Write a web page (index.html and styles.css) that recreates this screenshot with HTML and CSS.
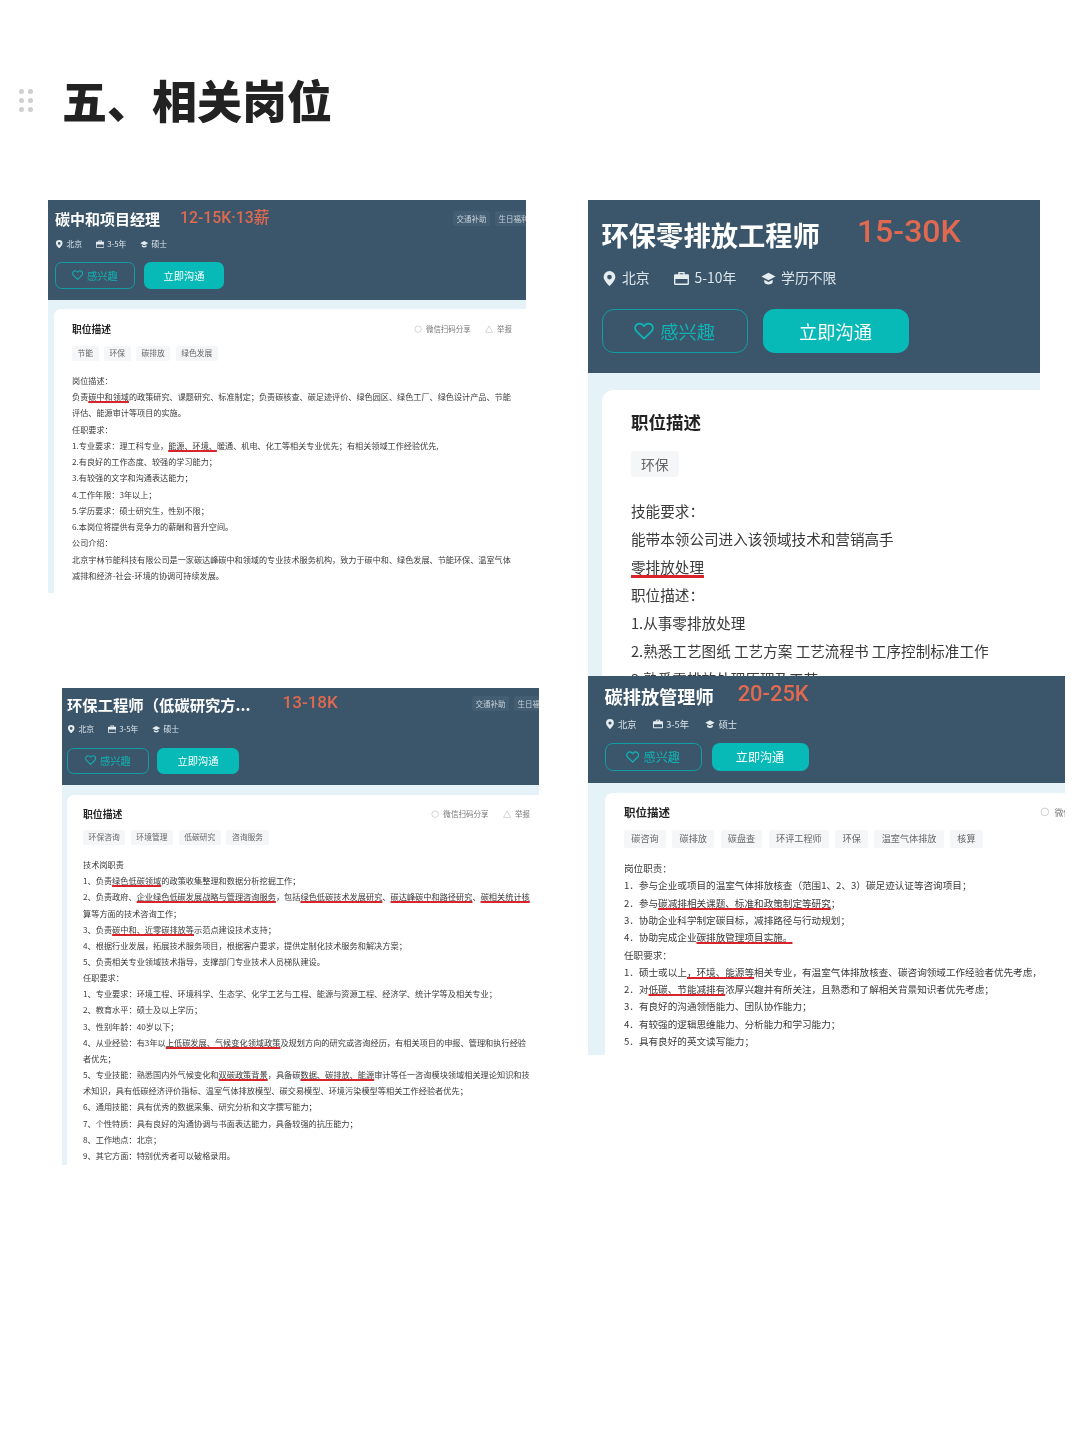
FILE: index.html
```html
<!DOCTYPE html>
<html lang="zh-CN">
<head>
  <meta charset="utf-8">
  <title>五、相关岗位</title>
  <link rel="stylesheet" href="styles.css">
</head>
<body>
  <svg width="0" height="0" class="defs">
    <symbol id="i-pin" viewBox="0 0 12 14"><path fill-rule="evenodd" d="M6 0a5.500 5.500 0 0 0-5.500 5.500C.5 9 6 14 6 14s5.500-5 5.500-8.500A5.500 5.500 0 0 0 6 0zm0 3.500a2.200 2.200 0 1 1 0 4.400 2.200 2.200 0 0 1 0-4.400z"/></symbol>
    <symbol id="i-bag" viewBox="0 0 14 14"><path fill-rule="evenodd" d="M4 1h6v2h3a1 1 0 0 1 1 1v8a1 1 0 0 1-1 1H1a1 1 0 0 1-1-1V4a1 1 0 0 1 1-1h3zm1.300 1.200V3h3.400v-.8zM1.300 7.500V11.700h11.400V7.500z"/></symbol>
    <symbol id="i-cap" viewBox="0 0 16 14"><path d="M8 1 .5 5 8 9l7.500-4z"/><path d="M3.500 8.300V11c0 1.300 2 2.300 4.500 2.300s4.500-1 4.500-2.300V8.300L8 10.700z"/></symbol>
    <symbol id="i-heart" viewBox="0 0 20 18"><path fill="none" stroke="currentColor" stroke-width="1.800" stroke-linejoin="round" d="M10 16.500 2.600 9.300C.4 7.100.7 4 2.800 2.400 4.900.9 7.900 1.300 10 4c2.100-2.700 5.100-3.100 7.200-1.600 2.100 1.600 2.400 4.700.2 6.900z"/></symbol>
    <symbol id="i-share" viewBox="0 0 14 14"><circle cx="7" cy="7" r="5.500" fill="none" stroke="currentColor" stroke-width="1"/></symbol>
    <symbol id="i-warn" viewBox="0 0 14 14"><path fill="none" stroke="currentColor" stroke-width="1" d="M7 1.500 13 12.500H1z"/></symbol>
  </svg>

  <header class="page-head">
    <div class="grip"><i></i><i></i><i></i><i></i><i></i><i></i></div>
    <h1>五、相关岗位</h1>
  </header>

  <!-- 环保零排放 -->
  <section class="shot shot-b">
    <div class="head">
      <div class="top">
        <h2>环保零排放工程师</h2>
        <span class="pay">15-30K</span>
      </div>
      <div class="meta">
        <span><svg class="ico"><use href="#i-pin"/></svg>北京</span>
        <span><svg class="ico"><use href="#i-bag"/></svg>5-10年</span>
        <span><svg class="ico"><use href="#i-cap"/></svg>学历不限</span>
      </div>
      <div class="btns">
        <span class="btn btn-line"><svg class="heart"><use href="#i-heart"/></svg>感兴趣</span>
        <span class="btn btn-fill">立即沟通</span>
      </div>
    </div>
    <div class="panel">
      <div class="panel-top"><h3>职位描述</h3></div>
      <div class="tags"><span>环保</span></div>
      <div class="desc">
        技能要求：<br>
        能带本领公司进入该领域技术和营销高手<br>
        <u>零排放处理</u><br>
        职位描述：<br>
        1.从事零排放处理<br>
        2.熟悉工艺图纸 工艺方案 工艺流程书 工序控制标准工作<br>
        3.熟悉零排放处理原理及工艺
      </div>
    </div>
  </section>

  <!-- 碳中和 -->
  <section class="shot shot-a">
    <div class="head">
      <div class="top">
        <h2>碳中和项目经理</h2>
        <span class="pay">12-15K·13薪</span>
        <div class="perks"><span>交通补助</span><span>生日福利</span></div>
      </div>
      <div class="meta">
        <span><svg class="ico"><use href="#i-pin"/></svg>北京</span>
        <span><svg class="ico"><use href="#i-bag"/></svg>3-5年</span>
        <span><svg class="ico"><use href="#i-cap"/></svg>硕士</span>
      </div>
      <div class="btns">
        <span class="btn btn-line"><svg class="heart"><use href="#i-heart"/></svg>感兴趣</span>
        <span class="btn btn-fill">立即沟通</span>
      </div>
    </div>
    <div class="panel">
      <div class="panel-top">
        <h3>职位描述</h3>
        <div class="links">
          <span><svg class="ico-s"><use href="#i-share"/></svg>微信扫码分享</span>
          <span><svg class="ico-s"><use href="#i-warn"/></svg>举报</span>
        </div>
      </div>
      <div class="tags"><span>节能</span><span>环保</span><span>碳排放</span><span>绿色发展</span></div>
      <div class="desc">
        岗位描述：<br>
        负责<u>碳中和领域</u>的政策研究、课题研究、标准制定；负责碳核查、碳足迹评价、绿色园区、绿色工厂、绿色设计产品、节能<br>
        评估、能源审计等项目的实施。<br>
        任职要求：<br>
        1.专业要求：理工科专业，<u>能源、环境、</u>暖通、机电、化工等相关专业优先；有相关领域工作经验优先,<br>
        2.有良好的工作态度、较强的学习能力；<br>
        3.有较强的文字和沟通表达能力；<br>
        4.工作年限：3年以上；<br>
        5.学历要求：硕士研究生，性别不限；<br>
        6.本岗位将提供有竞争力的薪酬和晋升空间。<br>
        公司介绍：<br>
        北京宇林节能科技有限公司是一家碳达峰碳中和领域的专业技术服务机构，致力于碳中和、绿色发展、节能环保、温室气体<br>
        减排和经济-社会-环境的协调可持续发展。
      </div>
    </div>
  </section>

  <!-- 低碳研究 -->
  <section class="shot shot-c">
    <div class="head">
      <div class="top">
        <h2>环保工程师（低碳研究方...</h2>
        <span class="pay">13-18K</span>
        <div class="perks"><span>交通补助</span><span>生日福利</span></div>
      </div>
      <div class="meta">
        <span><svg class="ico"><use href="#i-pin"/></svg>北京</span>
        <span><svg class="ico"><use href="#i-bag"/></svg>3-5年</span>
        <span><svg class="ico"><use href="#i-cap"/></svg>硕士</span>
      </div>
      <div class="btns">
        <span class="btn btn-line"><svg class="heart"><use href="#i-heart"/></svg>感兴趣</span>
        <span class="btn btn-fill">立即沟通</span>
      </div>
    </div>
    <div class="panel">
      <div class="panel-top">
        <h3>职位描述</h3>
        <div class="links">
          <span><svg class="ico-s"><use href="#i-share"/></svg>微信扫码分享</span>
          <span><svg class="ico-s"><use href="#i-warn"/></svg>举报</span>
        </div>
      </div>
      <div class="tags"><span>环保咨询</span><span>环境管理</span><span>低碳研究</span><span>咨询服务</span></div>
      <div class="desc">
        技术岗职责<br>
        1、负责<u>绿色低碳领域</u>的政策收集整理和数据分析挖掘工作；<br>
        2、负责政府、<u>企业绿色低碳发展战略与管理咨询服务</u>，包括<u>绿色低碳技术发展研究</u>、<u>碳达峰碳中和路径研究</u>、<u>碳相关统计核</u><br>
        算等方面的技术咨询工作；<br>
        3、负责<u>碳中和、近零碳排放等</u>示范点建设技术支持；<br>
        4、根据行业发展，拓展技术服务项目，根据客户要求，提供定制化技术服务和解决方案；<br>
        5、负责相关专业领域技术指导，支撑部门专业技术人员梯队建设。<br>
        任职要求：<br>
        1、专业要求：环境工程、环境科学、生态学、化学工艺与工程、能源与资源工程、经济学、统计学等及相关专业；<br>
        2、教育水平：硕士及以上学历；<br>
        3、性别年龄：40岁以下；<br>
        4、从业经验：有3年以<u>上低碳发展、气候变化领域政策</u>及规划方向的研究或咨询经历，有相关项目的申报、管理和执行经验<br>
        者优先；<br>
        5、专业技能：熟悉国内外气候变化和<u>双碳政策背景</u>，具备碳<u>数据、碳排放、能源</u>审计等任一咨询模块领域相关理论知识和技<br>
        术知识，具有低碳经济评价指标、温室气体排放模型、碳交易模型、环境污染模型等相关工作经验者优先；<br>
        6、通用技能：具有优秀的数据采集、研究分析和文字撰写能力；<br>
        7、个性特质：具有良好的沟通协调与书面表达能力，具备较强的抗压能力；<br>
        8、工作地点：北京；<br>
        9、其它方面：特别优秀者可以破格录用。
      </div>
    </div>
  </section>

  <!-- 碳排放 -->
  <section class="shot shot-d">
    <div class="head">
      <div class="top">
        <h2>碳排放管理师</h2>
        <span class="pay">20-25K</span>
      </div>
      <div class="meta">
        <span><svg class="ico"><use href="#i-pin"/></svg>北京</span>
        <span><svg class="ico"><use href="#i-bag"/></svg>3-5年</span>
        <span><svg class="ico"><use href="#i-cap"/></svg>硕士</span>
      </div>
      <div class="btns">
        <span class="btn btn-line"><svg class="heart"><use href="#i-heart"/></svg>感兴趣</span>
        <span class="btn btn-fill">立即沟通</span>
      </div>
    </div>
    <div class="panel">
      <div class="panel-top">
        <h3>职位描述</h3>
        <div class="links">
          <span><svg class="ico-s"><use href="#i-share"/></svg>微信扫码分享</span>
          <span><svg class="ico-s"><use href="#i-warn"/></svg>举报</span>
        </div>
      </div>
      <div class="tags"><span>碳咨询</span><span>碳排放</span><span>碳盘查</span><span>环评工程师</span><span>环保</span><span>温室气体排放</span><span>核算</span></div>
      <div class="desc">
        岗位职责：<br>
        1．参与企业或项目的温室气体排放核查（范围1、2、3）碳足迹认证等咨询项目；<br>
        2．参与<u>碳减排相关课题、标准和政策制定等研究</u>；<br>
        3．协助企业科学制定碳目标，减排路径与行动规划；<br>
        4．协助完成企业<u>碳排放管理项目实施。</u><br>
        任职要求：<br>
        1．硕士或以上<u>，环境、能源等</u>相关专业，有温室气体排放核查、碳咨询领域工作经验者优先考虑，<br>
        2．对<u>低碳、节能减排有</u>浓厚兴趣并有所关注，且熟悉和了解相关背景知识者优先考虑；<br>
        3．有良好的沟通领悟能力、团队协作能力；<br>
        4．有较强的逻辑思维能力、分析能力和学习能力；<br>
        5．具有良好的英文读写能力；
      </div>
    </div>
  </section>
</body>
</html>
```

FILE: styles.css
```css
body {
  margin: 0;
  height: 1440px;
  position: relative;
  overflow: hidden;
  background-color: #fff;
  font-family: "Noto Sans CJK SC", "Noto Sans", sans-serif;
  color: #333;
}

.defs {
  display: block;
  height: 0;
}

/* page title */
.page-head {
  display: flex;
  align-items: center;
  padding: 66px 0 0 19px;
  gap: 29px;
  filter: blur(0.5px);
}

.grip {
  display: grid;
  grid-template-columns: 5px 5px;
  gap: 4px;
}

.grip i {
  width: 5px;
  height: 5px;
  border-radius: 50%;
  background-color: #cfcfcf;
}

h1 {
  margin: 0;
  font-size: 45px;
  line-height: 68px;
  font-weight: 900;
  color: #222;
}

/* the four pasted job cards, each at its own zoom */
.shot {
  position: absolute;
  overflow: hidden;
  background-color: #e5f3f9;
  filter: blur(0.45px);
}

.shot-a {
  left: 48px;
  top: 200px;
  width: 478px;
  height: 393px;
  font-size: 8.15px;
  --hf: 8.2px;
  --head-h: 100px;
  --head-x: 7px;
  --head-pt: 11.2px;
  --h2: 15px;
  --pay: 15.8px;
  --pay-ml: 20px;
  --meta-mt: 11px;
  --btn-mt: 11.8px;
  --btn-w: 80px;
  --btn-h: 27px;
  --btn-gap: 9px;
  --panel-x: 6px;
  --panel-y: 9px;
  --panel-pt: 12.4px;
  --pad-x: 18px;
  --tag-mt: 10px;
  --desc-mt: 12px;
  --lh: 16.25px;
}

.shot-b {
  left: 588px;
  top: 200px;
  width: 452px;
  height: 476px;
  font-size: 14.6px;
  --hf: 14.6px;
  --head-h: 173px;
  --head-x: 13.5px;
  --head-pt: 20px;
  --h2: 27.3px;
  --pay: 32px;
  --pay-ml: 37px;
  --meta-mt: 19.7px;
  --btn-mt: 19.3px;
  --btn-w: 146px;
  --btn-h: 44px;
  --btn-gap: 15px;
  --panel-x: 14px;
  --panel-y: 17px;
  --panel-pt: 18.5px;
  --pad-x: 29px;
  --tag-mt: 16px;
  --desc-mt: 20px;
  --lh: 28px;
}

.shot-c {
  left: 62px;
  top: 688px;
  width: 477px;
  height: 477px;
  font-size: 8.2px;
  --hf: 8.2px;
  --head-h: 97px;
  --head-x: 5px;
  --head-pt: 8.2px;
  --h2: 15.33px;
  --pay: 17px;
  --pay-ml: 32px;
  --meta-mt: 11px;
  --btn-mt: 12.5px;
  --btn-w: 82px;
  --btn-h: 26px;
  --btn-gap: 8px;
  --panel-x: 5px;
  --panel-y: 10px;
  --panel-pt: 11.5px;
  --pad-x: 16px;
  --tag-mt: 9px;
  --desc-mt: 11px;
  --lh: 16.15px;
}

.shot-d {
  left: 588px;
  top: 676px;
  width: 477px;
  height: 379px;
  font-size: 9.6px;
  --hf: 9.7px;
  --head-h: 107px;
  --head-x: 16.5px;
  --head-pt: 10.8px;
  --h2: 18.2px;
  --pay: 21.9px;
  --pay-ml: 24px;
  --meta-mt: 11.5px;
  --btn-mt: 11.7px;
  --btn-w: 97px;
  --btn-h: 28px;
  --btn-gap: 10px;
  --panel-x: 17px;
  --panel-y: 10px;
  --panel-pt: 10.5px;
  --pad-x: 19px;
  --tag-mt: 9.5px;
  --desc-mt: 12.5px;
  --lh: 17.3px;
}

.head {
  box-sizing: border-box;
  height: var(--head-h);
  padding: var(--head-pt) 0 0 var(--head-x);
  font-size: var(--hf);
  background-color: #3b566b;
  color: #dbe4ea;
}

.top {
  display: flex;
  align-items: center;
  height: 1.9em;
}

h2 {
  margin: 0;
  font-size: var(--h2);
  font-weight: 700;
  color: #fff;
  white-space: nowrap;
}

.pay {
  margin-left: var(--pay-ml);
  font-family: Roboto, "Noto Sans CJK SC", sans-serif;
  font-size: var(--pay);
  font-weight: 500;
  line-height: 1;
  color: #e0694f;
  white-space: nowrap;
  position: relative;
  top: -0.1em;
}

.perks {
  display: flex;
  gap: 5px;
  margin-left: auto;
  font-size: 7.5px;
  color: #c6d2da;
}

.perks span {
  padding: 2px 3.5px;
  border-radius: 2px;
  background-color: #435d72;
  white-space: nowrap;
}

.shot-a .perks {
  margin-right: -6px;
}

.shot-c .perks {
  margin-right: -12px;
}

.meta {
  display: flex;
  gap: 1.75em;
  margin-top: var(--meta-mt);
  font-size: 0.95em;
  line-height: 1.58em;
  white-space: nowrap;
}

.meta span {
  display: flex;
  align-items: center;
  gap: 0.4em;
}

.ico {
  width: 1.08em;
  height: 1.08em;
  fill: #e6edf1;
}

.btns {
  display: flex;
  gap: var(--btn-gap);
  margin-top: var(--btn-mt);
}

.btn {
  box-sizing: border-box;
  display: flex;
  align-items: center;
  justify-content: center;
  gap: 0.35em;
  width: var(--btn-w);
  height: var(--btn-h);
  border-radius: 0.65em;
  font-size: 1.25em;
}

.btn-line {
  border: 1px solid #129ea3;
  color: #10b3b3;
}

.btn-fill {
  background-color: #07bab8;
  color: #fff;
}

.heart {
  width: 1.1em;
  height: 1em;
  color: #10b3b3;
}

.panel {
  box-sizing: border-box;
  margin: var(--panel-y) 0 0 var(--panel-x);
  padding: var(--panel-pt) 0 0 var(--pad-x);
  height: 100%;
  border-radius: 0.8em 0 0 0;
  background-color: #fff;
}

.panel-top {
  display: flex;
  align-items: center;
  height: 1.8em;
}

h3 {
  margin: 0;
  font-size: 1.2em;
  font-weight: 700;
  color: #222;
  white-space: nowrap;
}

.links {
  display: flex;
  gap: 1.9em;
  margin-left: auto;
  font-size: 0.92em;
  color: #777;
  white-space: nowrap;
}

.links span {
  display: flex;
  align-items: center;
  gap: 0.5em;
}

.ico-s {
  width: 1.1em;
  height: 1.1em;
  color: #bbb;
}

.shot-a .panel-top {
  margin-right: 14px;
}

.shot-c .panel-top {
  margin-right: 9px;
}

.shot-d .panel-top {
  margin-right: -91px;
}

.tags {
  display: flex;
  gap: 0.7em;
  margin-top: var(--tag-mt);
  font-size: 0.95em;
}

.tags span {
  padding: 0 0.72em;
  line-height: 1.9em;
  border-radius: 0.25em;
  background-color: #f5f6f8;
  color: #666;
  white-space: nowrap;
}

.shot-d .tags span {
  padding: 0 0.8em;
}

.desc {
  margin-top: var(--desc-mt);
  line-height: var(--lh);
  color: #3a3a3a;
  white-space: nowrap;
}

.desc u {
  text-decoration: underline #d8242a 2px;
  text-decoration-skip-ink: none;
  text-underline-offset: 0.12em;
}

.shot-b .desc u {
  text-decoration-thickness: 2.5px;
}
```
